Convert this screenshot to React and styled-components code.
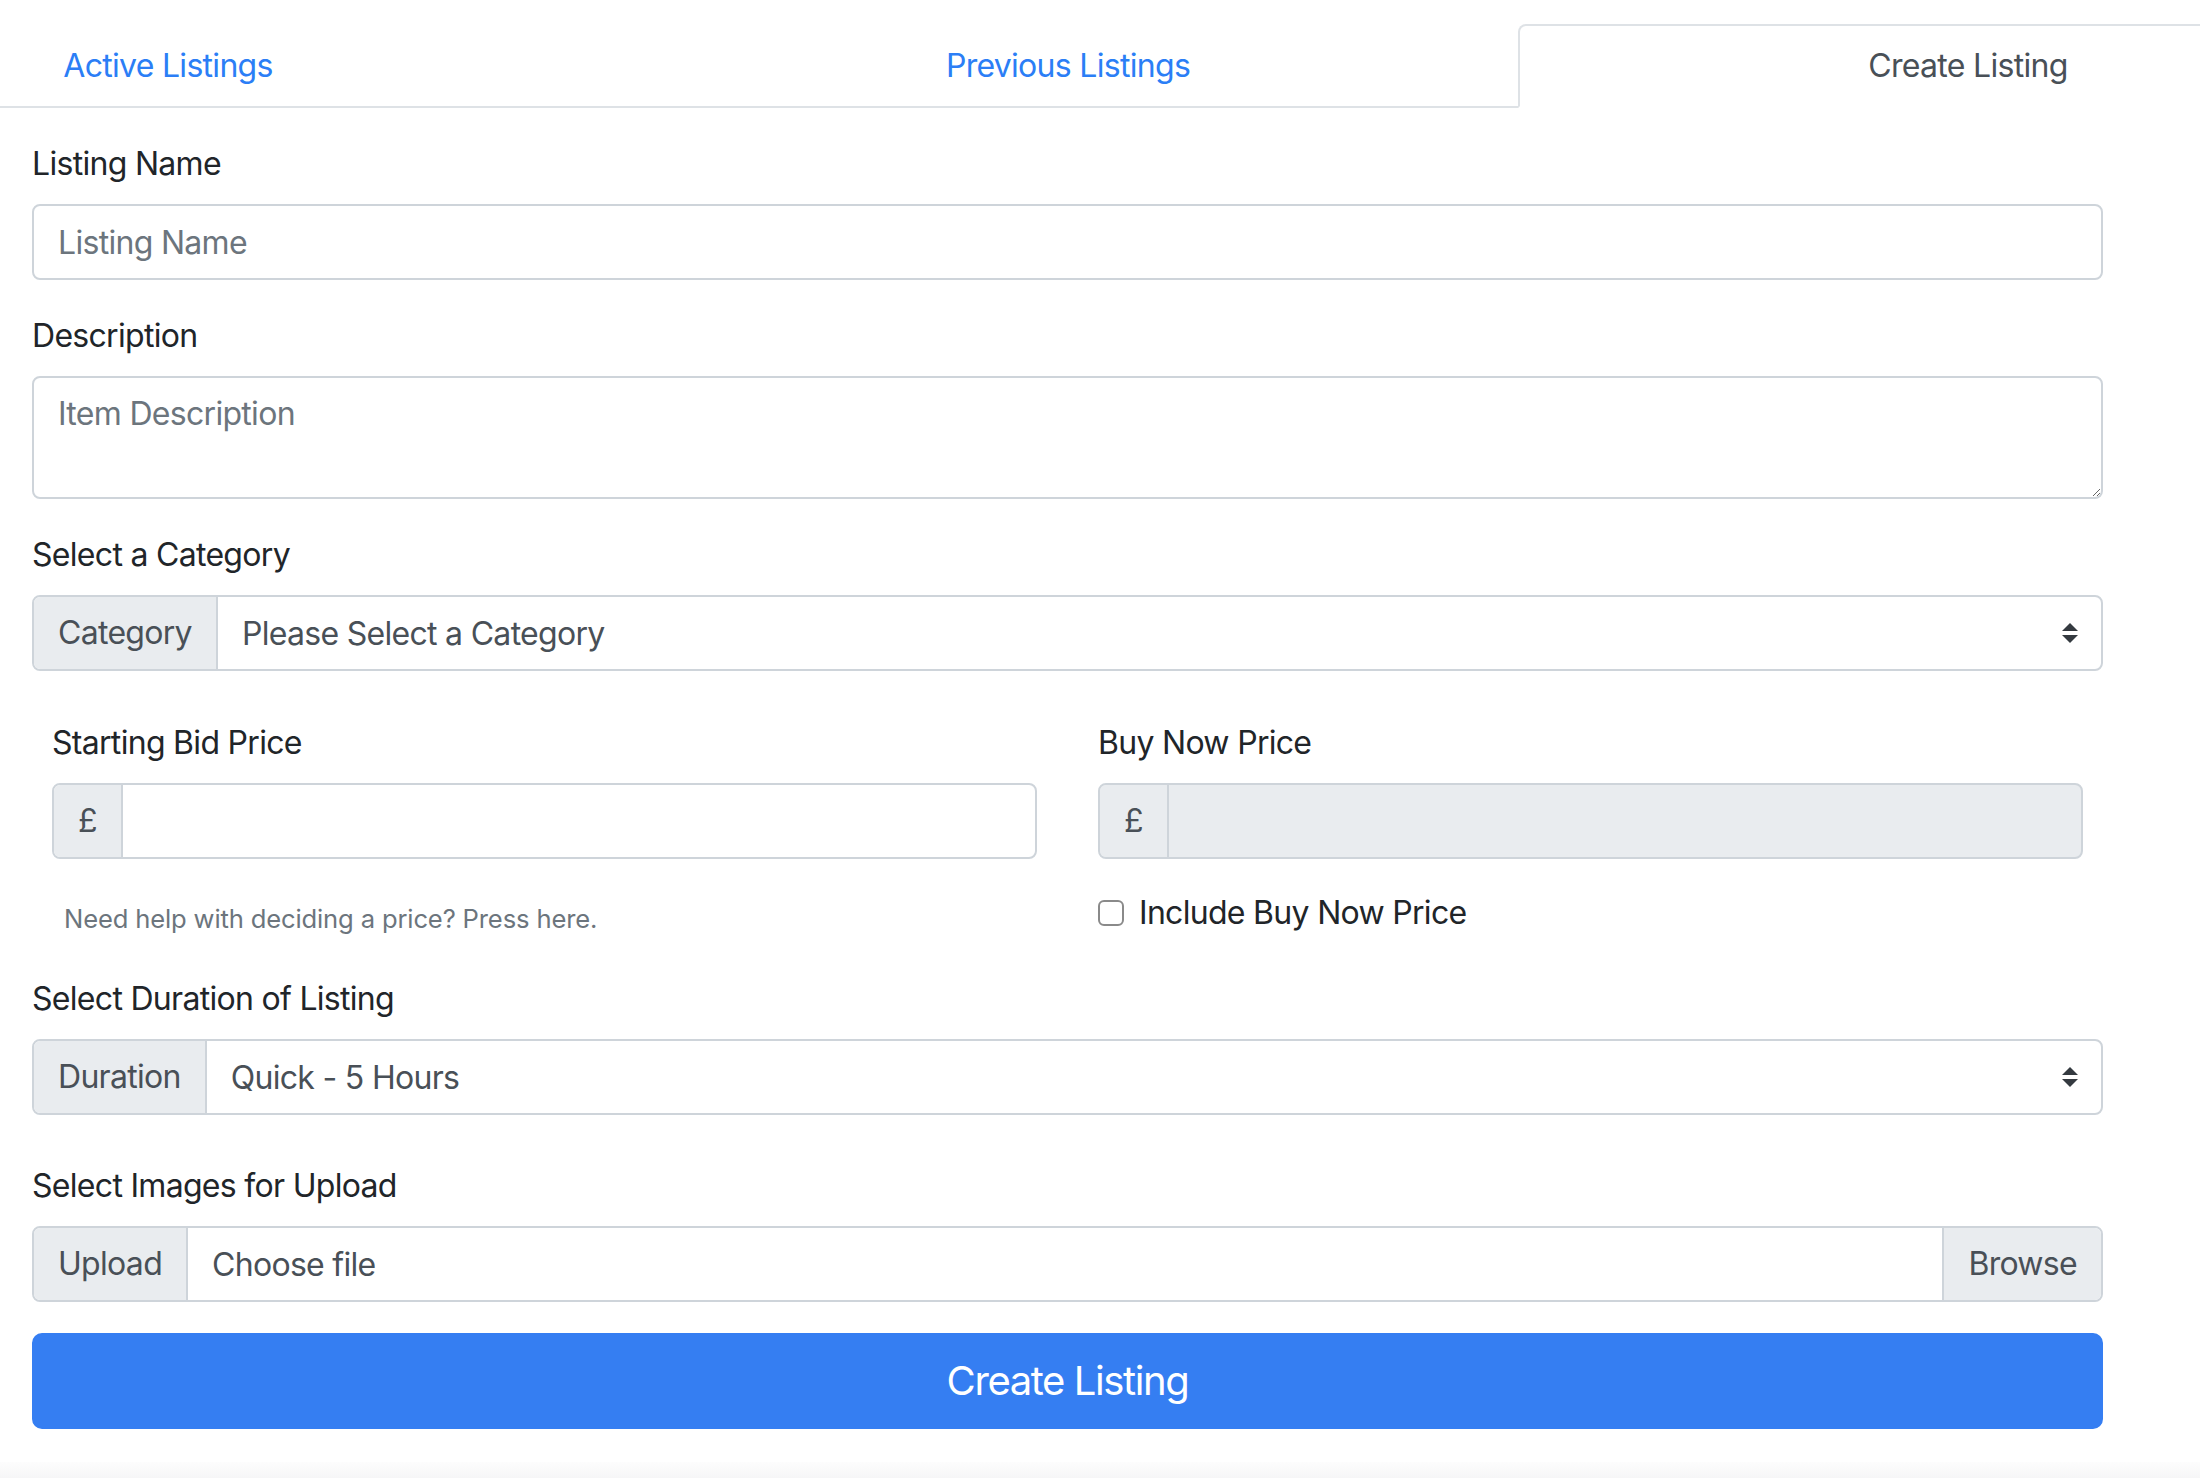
import React from "react";
import styled, { createGlobalStyle, css } from "styled-components";

const GlobalStyle = createGlobalStyle`
  html, body { margin: 0; padding: 0; background: #fff; }
  body {
    font-family: Inter, "Noto Sans", "Liberation Sans", sans-serif;
    color: #212529;
    overflow: hidden;
    letter-spacing: -0.7px;
  }
  *, *::before, *::after { box-sizing: border-box; }
`;

const Page = styled.div`
  width: 2200px;
  height: 1478px;
  overflow: hidden;
  display: flex;
  flex-direction: column;
`;

const Nav = styled.nav`
  display: flex;
  margin: 24px 0 0 -282px;
  border-bottom: 2px solid #dee2e6;
`;

const Tab = styled.a`
  flex: 0 0 900px;
  text-align: center;
  font-size: 32px;
  line-height: 48px;
  padding: 16px 32px;
  border: 2px solid transparent;
  border-radius: 8px 8px 0 0;
  margin-bottom: -2px;
  color: #2b7ef6;
  text-decoration: none;
  cursor: pointer;
  ${(p) =>
    p.$active &&
    css`
      color: #495057;
      background: #fff;
      border-color: #dee2e6 #dee2e6 #fff;
    `}
`;

const Form = styled.form`
  display: flex;
  flex-direction: column;
  padding: 32px 97px 0 32px;
`;

const Group = styled.div`
  display: flex;
  flex-direction: column;
  margin-bottom: ${(p) => p.$mb ?? 32}px;
`;

const Label = styled.label`
  display: block;
  font-size: 32px;
  line-height: 48px;
  margin-bottom: 16px;
  color: #212529;
`;

const fieldBase = css`
  display: block;
  width: 100%;
  font-family: inherit;
  font-size: 32px;
  line-height: 48px;
  letter-spacing: -0.7px;
  color: #495057;
  background: #fff;
  border: 2px solid #ced4da;
  border-radius: 8px;
  padding: 12px 24px;
  outline: none;
  &::placeholder {
    color: #6c757d;
  }
`;

const TextInput = styled.input`
  ${fieldBase}
  height: 76px;
`;

const TextArea = styled.textarea`
  ${fieldBase}
  height: 123px;
  resize: vertical;
`;

const InputGroup = styled.div`
  display: flex;
  align-items: stretch;
  height: 76px;
  border: 2px solid #ced4da;
  border-radius: 8px;
  overflow: hidden;
  background: ${(p) => (p.$disabled ? "#e9ecef" : "#fff")};
`;

const Addon = styled.span`
  display: flex;
  align-items: center;
  flex: 0 0 auto;
  padding: 0 24px;
  font-size: 32px;
  line-height: 48px;
  color: #495057;
  background: #e9ecef;
  ${(p) =>
    p.$end
      ? css`
          border-left: 2px solid #ced4da;
        `
      : css`
          border-right: 2px solid #ced4da;
        `}
`;

const GroupInput = styled.input`
  flex: 1;
  min-width: 0;
  border: none;
  outline: none;
  background: transparent;
  padding: 0 24px;
  font-family: inherit;
  font-size: 32px;
  letter-spacing: -0.7px;
  color: #495057;
`;

const SelectWrap = styled.div`
  position: relative;
  flex: 1;
  display: flex;
`;

const Select = styled.select`
  appearance: none;
  -webkit-appearance: none;
  flex: 1;
  border: none;
  outline: none;
  background: transparent;
  padding: 0 64px 0 24px;
  font-family: inherit;
  font-size: 32px;
  letter-spacing: -0.7px;
  color: #495057;
`;

const Arrow = styled.svg`
  position: absolute;
  right: 23px;
  top: 50%;
  transform: translateY(-50%);
  width: 16px;
  height: 20px;
  pointer-events: none;
`;

const FileText = styled.span`
  flex: 1;
  display: flex;
  align-items: center;
  padding: 0 24px;
  font-size: 32px;
  color: #495057;
`;

const PriceRow = styled.div`
  display: grid;
  grid-template-columns: 1fr 1fr;
  column-gap: 61px;
  padding: 0 20px;
  margin-bottom: 37px;
`;

const Col = styled.div`
  display: flex;
  flex-direction: column;
`;

const HelpText = styled.small`
  display: block;
  margin-top: 41px;
  padding-left: 12px;
  font-size: 25.6px;
  line-height: 38.4px;
  letter-spacing: -0.15px;
  color: #6c757d;
`;

const CheckRow = styled.label`
  display: flex;
  align-items: center;
  gap: 15px;
  margin-top: 30px;
  font-size: 32px;
  line-height: 48px;
  color: #212529;
`;

const CheckBox = styled.input`
  appearance: none;
  -webkit-appearance: none;
  margin: 0;
  width: 26px;
  height: 26px;
  border: 2px solid #8a8a8a;
  border-radius: 6px;
  background: #fff;
`;

const SubmitButton = styled.button`
  display: block;
  width: 100%;
  height: 96px;
  padding: 16px 32px;
  font-family: inherit;
  font-size: 40px;
  line-height: 60px;
  letter-spacing: -1.4px;
  color: #fff;
  background: #357ef2;
  border: 2px solid #357ef2;
  border-radius: 10px;
  cursor: pointer;
`;

const Footer = styled.div`
  margin-top: auto;
  height: 16px;
  background: linear-gradient(#fdfdfd, #f6f6f7);
`;

const SelectArrow = () => (
  <Arrow viewBox="0 0 4 5">
    <path fill="#343a40" d="M2 0L0 2h4zm0 5L0 3h4z" />
  </Arrow>
);

export default function App() {
  return (
    <Page>
      <GlobalStyle />
      <Nav>
        <Tab>Active Listings</Tab>
        <Tab>Previous Listings</Tab>
        <Tab $active>Create Listing</Tab>
      </Nav>
      <Form onSubmit={(e) => e.preventDefault()}>
        <Group>
          <Label>Listing Name</Label>
          <TextInput placeholder="Listing Name" />
        </Group>
        <Group>
          <Label>Description</Label>
          <TextArea placeholder="Item Description" />
        </Group>
        <Group $mb={48}>
          <Label>Select a Category</Label>
          <InputGroup>
            <Addon>Category</Addon>
            <SelectWrap>
              <Select defaultValue="">
                <option value="">Please Select a Category</option>
              </Select>
              <SelectArrow />
            </SelectWrap>
          </InputGroup>
        </Group>
        <PriceRow>
          <Col>
            <Label>Starting Bid Price</Label>
            <InputGroup>
              <Addon>£</Addon>
              <GroupInput />
            </InputGroup>
            <HelpText>Need help with deciding a price? Press here.</HelpText>
          </Col>
          <Col>
            <Label>Buy Now Price</Label>
            <InputGroup $disabled>
              <Addon>£</Addon>
              <GroupInput disabled />
            </InputGroup>
            <CheckRow>
              <CheckBox type="checkbox" />
              Include Buy Now Price
            </CheckRow>
          </Col>
        </PriceRow>
        <Group $mb={47}>
          <Label>Select Duration of Listing</Label>
          <InputGroup>
            <Addon>Duration</Addon>
            <SelectWrap>
              <Select defaultValue="quick">
                <option value="quick">Quick - 5 Hours</option>
              </Select>
              <SelectArrow />
            </SelectWrap>
          </InputGroup>
        </Group>
        <Group $mb={31}>
          <Label>Select Images for Upload</Label>
          <InputGroup>
            <Addon>Upload</Addon>
            <FileText>Choose file</FileText>
            <Addon $end>Browse</Addon>
          </InputGroup>
        </Group>
        <SubmitButton type="submit">Create Listing</SubmitButton>
      </Form>
      <Footer />
    </Page>
  );
}
